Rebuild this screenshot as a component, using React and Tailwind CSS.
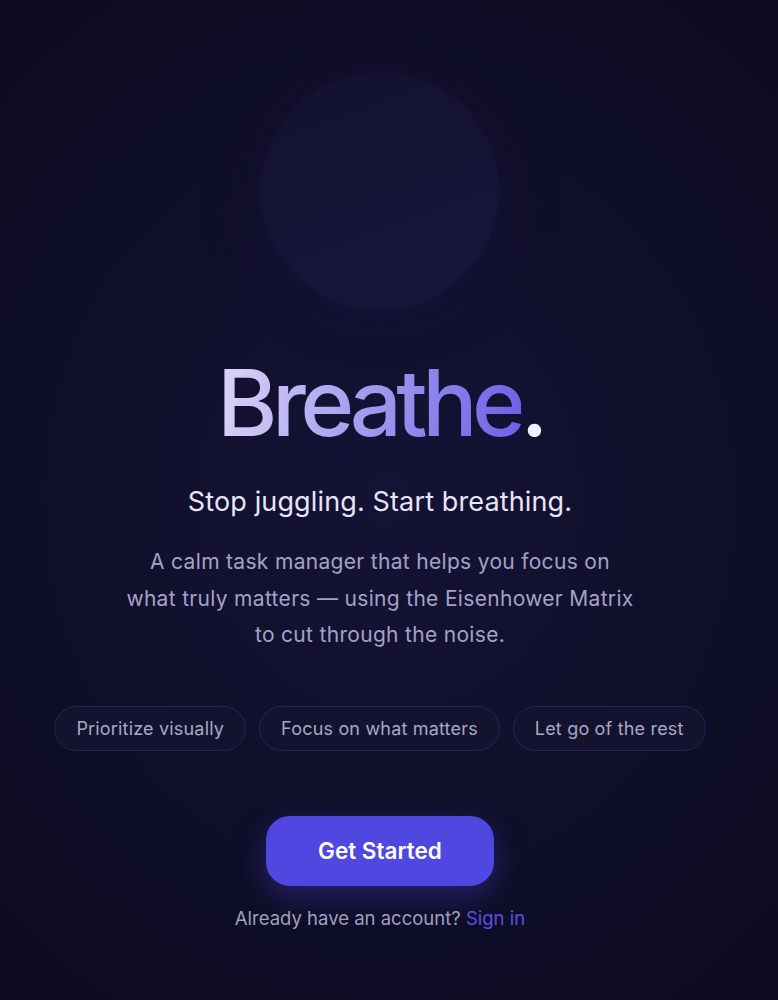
export default function App() {
  const chips = ["Prioritize visually", "Focus on what matters", "Let go of the rest"];

  return (
    <div
      className="flex h-[1000px] w-full flex-col items-center overflow-hidden bg-[radial-gradient(ellipse_70%_60%_at_50%_50%,#141336_0%,#100f2b_55%,#0d0c21_100%)] pr-[18px] pt-[72px] text-center"
      style={{ fontFamily: "Inter, 'Noto Sans', sans-serif" }}
    >
      <div className="h-[238px] w-[238px] rounded-full bg-[linear-gradient(160deg,#131232_0%,#16153c_100%)] shadow-[0_0_60px_rgba(30,28,80,0.25)]" />

      <h1 className="mt-[47px] text-[92px] font-medium leading-none tracking-[-0.06em]">
        <span className="bg-[linear-gradient(100deg,#dcd8f7_0%,#a8a0ef_45%,#6a5fe6_100%)] bg-clip-text text-transparent">
          Breathe
        </span>
        <span className="text-[#f1effc]">.</span>
      </h1>

      <p className="mt-[37px] text-[27px] leading-[32px] tracking-[0.005em] text-[#e7e5f6]">
        Stop juggling. Start breathing.
      </p>

      <p className="mt-[26px] text-[21px] leading-[36.5px] tracking-[0.015em] text-[#a4a2c6]">
        A calm task manager that helps you focus on
        <br />
        what truly matters — using the Eisenhower Matrix
        <br />
        to cut through the noise.
      </p>

      <div className="mt-[52px] flex gap-[13px]">
        {chips.map((chip) => (
          <span
            key={chip}
            className="flex h-[45px] items-center rounded-full border border-[#26245a] bg-[#13122f] px-[21px] text-[18px] tracking-[0.01em] text-[#a9a7c8]"
          >
            {chip}
          </span>
        ))}
      </div>

      <button className="mt-[65px] h-[70px] w-[228px] rounded-[24px] bg-[#4f47df] text-[22.5px] font-semibold text-white shadow-[0_10px_30px_rgba(79,71,223,0.35)]">
        Get Started
      </button>

      <p className="mt-[18px] text-[18.5px] leading-[28px] text-[#a09fbe]">
        Already have an account? <a className="text-[#5a50e6]">Sign in</a>
      </p>
    </div>
  );
}
